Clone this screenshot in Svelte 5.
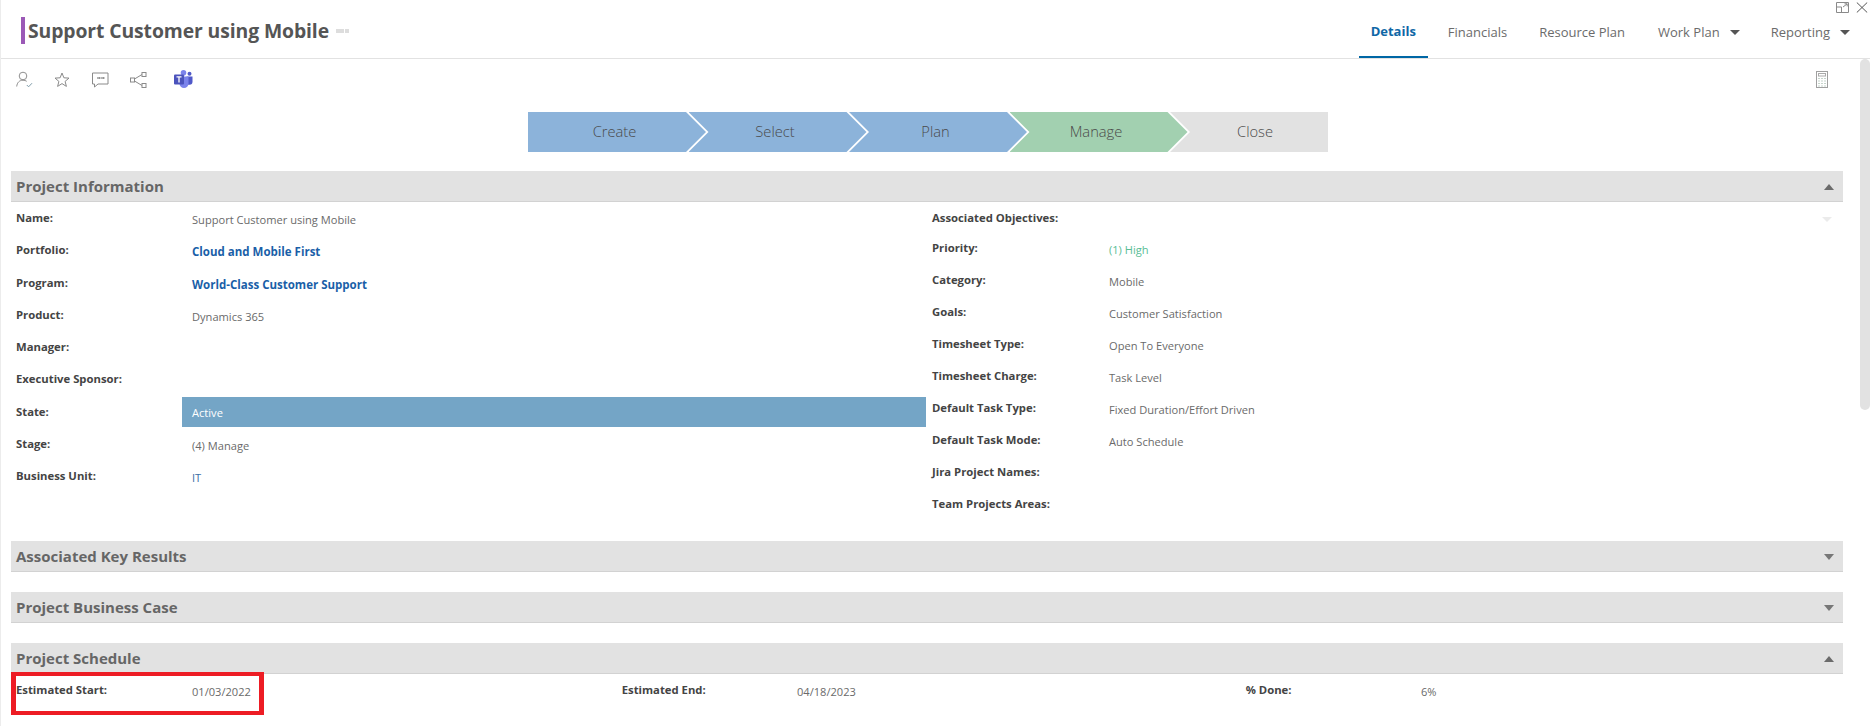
<script>
  const left = [
    { label: 'Name:', value: 'Support Customer using Mobile' },
    { label: 'Portfolio:', value: 'Cloud and Mobile First', kind: 'link' },
    { label: 'Program:', value: 'World-Class Customer Support', kind: 'link' },
    { label: 'Product:', value: 'Dynamics 365' },
    { label: 'Manager:', value: '' },
    { label: 'Executive Sponsor:', value: '' },
    { label: 'State:', value: 'Active', kind: 'state' },
    { label: 'Stage:', value: '(4) Manage' },
    { label: 'Business Unit:', value: 'IT', kind: 'unit' }
  ];
  const right = [
    { label: 'Priority:', value: '(1) High', kind: 'high' },
    { label: 'Category:', value: 'Mobile' },
    { label: 'Goals:', value: 'Customer Satisfaction' },
    { label: 'Timesheet Type:', value: 'Open To Everyone' },
    { label: 'Timesheet Charge:', value: 'Task Level' },
    { label: 'Default Task Type:', value: 'Fixed Duration/Effort Driven' },
    { label: 'Default Task Mode:', value: 'Auto Schedule' },
    { label: 'Jira Project Names:', value: '' },
    { label: 'Team Projects Areas:', value: '' }
  ];
  const stages = [
    { name: 'Create', cls: 'done' },
    { name: 'Select', cls: 'done' },
    { name: 'Plan', cls: 'done' },
    { name: 'Manage', cls: 'current' },
    { name: 'Close', cls: 'todo' }
  ];
</script>

<div class="page">
  <div class="winicons">
    <svg width="13" height="11" viewBox="0 0 13 11" fill="none" stroke="#8a8a8a"><path d="M.5 5V.5h12v10H.5V5h5v5.5"/><path d="M7 5l4-3M8.500 1.800h2.700v2.600"/></svg>
    <svg width="12" height="11" viewBox="0 0 12 11" fill="none" stroke="#555"><path d="M.8.500l10.400 10M11.200.500L.8 10.500"/></svg>
  </div>

  <header class="topbar">
    <div class="title">
      <span class="bar"></span>
      <h1>Support Customer using Mobile</h1>
      <span class="dots"><i></i><i></i><i></i></span>
    </div>
    <nav class="tabs">
      <a class="tab active">Details</a>
      <a class="tab t2">Financials</a>
      <a class="tab t3">Resource Plan</a>
      <a class="tab t4">Work Plan<span class="caret"></span></a>
      <a class="tab t5">Reporting<span class="caret"></span></a>
    </nav>
  </header>

  <div class="toolbar">
    <div class="tools">
      <svg class="i1" width="17" height="17" viewBox="0 0 17 17" fill="none" stroke="#8f8f8f"><circle cx="7" cy="5" r="3.800"/><path d="M.7 15.500c.4-4 2.800-6.300 6.300-6.300 1.500 0 2.700.4 3.700 1.100"/><path d="M10.800 14l1.800 1.800 3.400-3.600" stroke="#7d9aa8"/></svg>
      <svg class="i2" width="16" height="16" viewBox="0 0 16 16" fill="none" stroke="#8a8a8a"><path d="M8 1l1.900 4.800 5.100.3-3.900 3.300 1.300 5L8 11.600l-4.400 2.800 1.300-5L1 6.100l5.100-.3z"/></svg>
      <svg class="i3" width="17" height="16" viewBox="0 0 17 16" fill="none" stroke="#8a8a8a"><path d="M.5 1h15.500v11H6l-3.500 3v-3h-2z"/><path d="M6 5v2M7.800 5v2M10 5v2M11.800 5v2" stroke="#666" stroke-width="1"/></svg>
      <svg class="i4" width="17" height="16" viewBox="0 0 17 16" fill="none" stroke="#8a8a8a"><rect x=".5" y="6" width="4" height="4"/><rect x="12" y=".5" width="4" height="4"/><rect x="12" y="11.500" width="4" height="4"/><path d="M4.500 7l7.500-4.500M4.500 9l7.500 4.500"/></svg>
      <svg class="i5" width="19" height="18" viewBox="0 0 19 18"><circle cx="15.500" cy="3.800" r="2" fill="#5059c9"/><path d="M12.500 6.500h6v5.300a3 3 0 01-3 3h-3z" fill="#5059c9"/><circle cx="9.500" cy="2.800" r="2.800" fill="#7b83eb"/><path d="M5.500 6.500h9v7a4.500 4.500 0 01-9 0z" fill="#7b83eb"/><rect x="0" y="4.500" width="10" height="10" rx="1" fill="#4b53bc"/><path d="M2.500 6.800h5M5 6.800v5.700" stroke="#fff" stroke-width="1.300" fill="none"/></svg>
    </div>
    <svg class="calc" width="12" height="17" viewBox="0 0 12 17" fill="none"><rect x=".5" y=".5" width="11" height="16" stroke="#a0a0a0"/><rect x="2.500" y="2.500" width="7" height="2.500" stroke="#aaa"/><path d="M2.500 7.500h1M5.500 7.500h1M8.500 7.500h1M2.500 10h1M5.500 10h1M8.500 10h1M2.500 12.500h1M5.500 12.500h1M8.500 12.500h1M2.500 15h1M5.500 15h1M8.500 15h1" stroke="#8aa896"/></svg>
  </div>

  <div class="stages">
    {#each stages as s, i}
      <div class="stage {s.cls}" class:first={i === 0} class:last={i === stages.length - 1}>{s.name}</div>
    {/each}
  </div>

  <section class="info">
    <div class="shead"><h2>Project Information</h2><span class="tri up"></span></div>
    <div class="cols">
      <div class="col lcol">
        {#each left as r}
          <div class="row">
            <span class="lab">{r.label}</span>
            <span class="val {r.kind ?? ''}">{r.value}</span>
          </div>
        {/each}
      </div>
      <div class="col rcol">
        <div class="assoc">
          <span class="lab">Associated Objectives:</span>
          <span class="tri faint"></span>
        </div>
        {#each right as r}
          <div class="row">
            <span class="lab">{r.label}</span>
            <span class="val {r.kind ?? ''}">{r.value}</span>
          </div>
        {/each}
      </div>
    </div>
  </section>

  <section class="closed k1"><div class="shead"><h2>Associated Key Results</h2><span class="tri down"></span></div></section>
  <section class="closed k2"><div class="shead"><h2>Project Business Case</h2><span class="tri down"></span></div></section>
  <section class="closed k2">
    <div class="shead"><h2>Project Schedule</h2><span class="tri up"></span></div>
    <div class="sched">
      <span class="lab">Estimated Start:</span><span class="val">01/03/2022</span>
      <span class="lab">Estimated End:</span><span class="val">04/18/2023</span>
      <span class="lab">% Done:</span><span class="val">6%</span>
    </div>
  </section>

  <div class="redbox"></div>
  <div class="scroll"></div>
</div>

<style>
  :global(body) { margin: 0; background: #fff; }
  .page {
    position: relative;
    width: 1870px;
    height: 726px;
    overflow: hidden;
    box-sizing: border-box;
    border-left: 1px solid #ececec;
    font-family: "Open Sans", "Liberation Sans", sans-serif;
    color: #666;
  }
  .winicons {
    position: absolute;
    top: 2px;
    right: 2px;
    display: flex;
    gap: 7px;
  }
  .topbar {
    height: 58px;
    display: flex;
    justify-content: space-between;
    border-bottom: 1px solid #e2e2e2;
  }
  .title { display: flex; align-items: center; padding-left: 20px; height: 58px; }
  .bar { width: 4px; height: 27px; background: #9b59b6; margin-top: 3px; }
  h1 {
    margin: 3px 0 0 3px;
    font-size: 19.350px;
    font-weight: 700;
    color: #555;
    letter-spacing: -0.1px;
  }
  .dots { display: flex; gap: 0.500px; margin: 3px 0 0 7px; }
  .dots i { width: 4px; height: 4px; background: #ddd; display: block; }
  .tabs { display: flex; height: 58px; padding-right: 20px; }
  .tab {
    font-size: 13px;
    color: #6b6b6b;
    display: flex;
    align-items: center;
    padding-top: 5px;
    box-sizing: border-box;
    height: 58px;
    white-space: nowrap;
  }
  .tab.active {
    color: #0f67a6;
    font-weight: 700;
    width: 69px;
    justify-content: center;
    border-bottom: 2px solid #0067a5;
    margin-right: 20px;
    margin-left: -1px;
  }
  .t3 { margin-left: 32px; }
  .t4 { margin-left: 33px; }
  .t5 { margin-left: 31px; }
  .caret {
    width: 0; height: 0;
    border-left: 5px solid transparent;
    border-right: 5px solid transparent;
    border-top: 5px solid #555;
    margin-left: 10px;
    margin-top: 1px;
  }
  .toolbar {
    height: 53px;
    display: flex;
    justify-content: space-between;
    align-items: flex-start;
    padding: 12px 42px 0 15px;
    box-sizing: border-box;
  }
  .tools { display: flex; align-items: center; gap: 22px; }
  .i2 { margin-left: -1px; }
  .i4 { margin-left: -1px; }
  .i5 { margin: -2px 0 0 5px; }
  .stages { display: flex; height: 40px; padding-left: 527px; }
  .stage {
    width: 178px;
    margin-right: -17.500px;
    height: 40px;
    box-sizing: border-box;
    display: flex;
    align-items: center;
    justify-content: center;
    font-size: 14.700px;
    font-weight: 300;
    color: #4a4a4a;
    padding: 0 5px 2px 0;
    clip-path: polygon(0 0, 158px 0, 178px 50%, 158px 100%, 0 100%, 20px 50%);
  }
  .stage.first { clip-path: polygon(0 0, 158px 0, 178px 50%, 158px 100%, 0 100%); }
  .stage.last {
    width: 158px;
    margin-right: 0;
    padding-left: 17px;
    clip-path: polygon(0 0, 100% 0, 100% 100%, 0 100%, 20px 50%);
  }
  .done { background: #8cb3da; }
  .current { background: #a2d0b0; }
  .todo { background: #e2e2e2; }
  .info { margin-top: 19px; }
  .shead {
    margin-left: 10px;
    width: 1832px;
    height: 31px;
    box-sizing: border-box;
    background: #e2e2e2;
    border-bottom: 1px solid #d2d2d2;
    display: flex;
    align-items: center;
    justify-content: space-between;
    padding: 0 9px 0 5px;
  }
  h2 { margin: 0; font-size: 15px; font-weight: 700; color: #666; }
  .tri {
    width: 0; height: 0;
    border-left: 5px solid transparent;
    border-right: 5px solid transparent;
  }
  .tri.up { border-bottom: 6px solid #6b6b6b; margin-top: 1px; }
  .tri.down { border-top: 6px solid #777; margin-top: 1px; }
  .tri.faint { border-top: 5px solid #ebebeb; margin: 14px 11px 0 0; }
  .cols { display: flex; margin-left: 10px; padding-top: 1px; }
  .col { box-sizing: border-box; }
  .lcol { width: 915px; }
  .rcol { width: 917px; padding-left: 6px; }
  .row {
    display: grid;
    height: 32.250px;
    align-items: start;
  }
  .lcol .row { grid-template-columns: 171px 1fr; }
  .rcol .row { grid-template-columns: 177px 1fr; height: 32px; }
  .assoc {
    display: flex;
    justify-content: space-between;
    align-items: flex-start;
    height: 30px;
  }
  .lab {
    font-size: 11.300px;
    font-weight: 700;
    color: #444;
    line-height: 18px;
    padding-top: 6px;
    white-space: nowrap;
  }
  .lcol .lab { padding-left: 5px; }
  .val {
    font-size: 11.100px;
    color: #6a6a6a;
    line-height: 18px;
    padding-top: 8px;
    padding-left: 10px;
    white-space: nowrap;
  }
  .rcol .val { padding-left: 0; }
  .val.link { color: #1a5fa8; font-weight: 700; font-size: 11.500px; }
  .val.unit { color: #3a6ea5; }
  .val.high { color: #59bd95; }
  .val.state {
    background: #74a5c6;
    color: #fff;
    height: 30px;
    box-sizing: border-box;
    padding-top: 7px;
  }
  .closed.k1 { margin-top: 20px; }
  .closed.k2 { margin-top: 20px; }
  .sched {
    margin: 1px 0 0 10px;
    display: grid;
    grid-template-columns: 171px 434.700px 170.300px 453.700px 170.300px 1fr;
    align-items: start;
  }
  .sched .lab { padding-left: 5px; }
  .sched .val { padding-left: 10px; }
  .redbox {
    position: absolute;
    left: 10px;
    top: 672px;
    width: 253px;
    height: 43px;
    box-sizing: border-box;
    border: 4px solid #ed1c24;
    border-left-width: 5px;
    border-right-width: 5px;
  }
  .scroll {
    position: absolute;
    left: 1859px;
    top: 59px;
    width: 10px;
    height: 351px;
    background: #e2e2e2;
    border-radius: 5px;
  }
</style>
